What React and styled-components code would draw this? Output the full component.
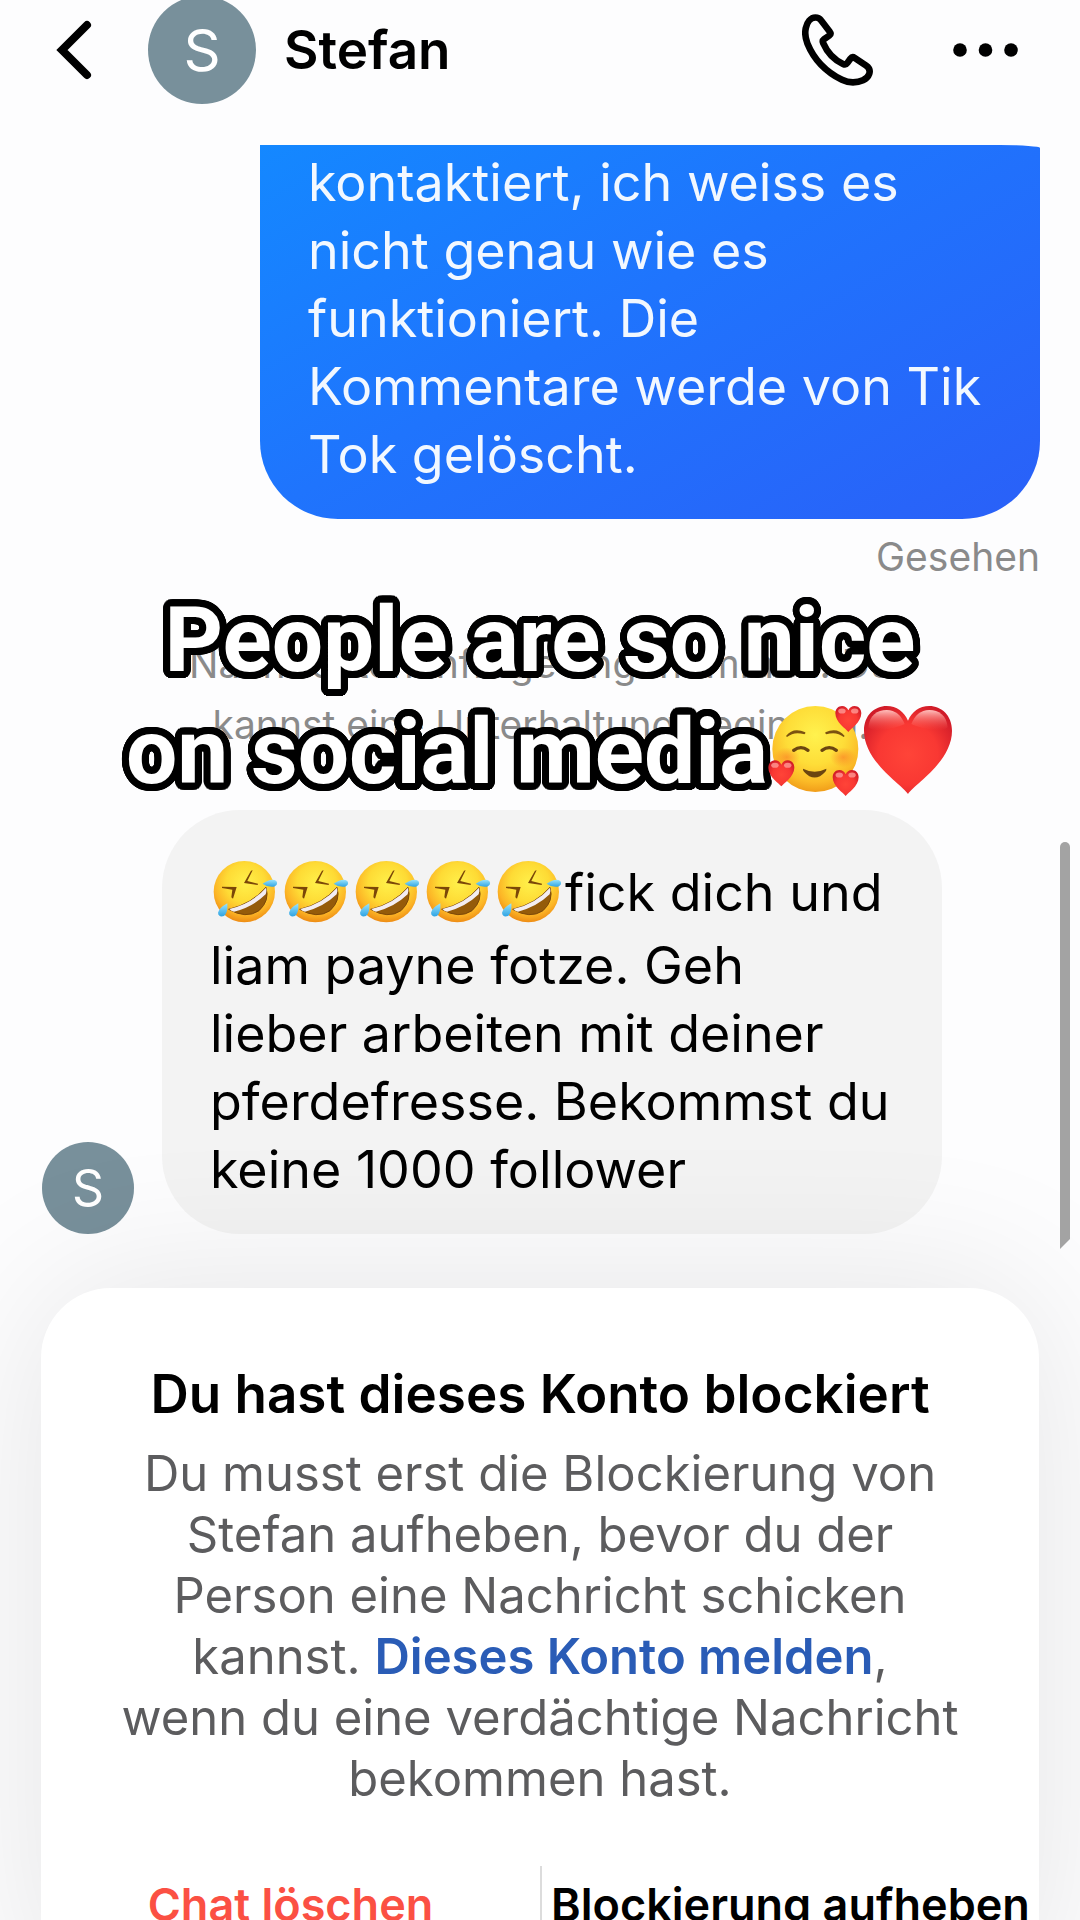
import React from "react";
import styled, { createGlobalStyle } from "styled-components";

const GlobalStyle = createGlobalStyle`
  *, *::before, *::after { box-sizing: border-box; }
  body {
    margin: 0;
    background: #fdfdfe;
    font-family: Inter, "Noto Sans", sans-serif;
    color: #000;
  }
  p, h1, h2 { margin: 0; }
`;

const Screen = styled.div`
  position: relative;
  height: 100vh;
  overflow: hidden;
  background: #fdfdfe;
`;

const Header = styled.header`
  display: flex;
  align-items: center;
  height: 100px;
  margin-bottom: 45px;
  padding: 0 62px 0 56px;
`;

const IconButton = styled.button`
  display: flex;
  padding: 0;
  border: 0;
  background: none;
  color: inherit;
  cursor: pointer;
`;

const Profile = styled.div`
  display: flex;
  flex: 1;
  align-items: center;
  gap: 28px;
  margin-left: 56px;
`;

const Actions = styled.div`
  display: flex;
  align-items: center;
  gap: 79px;
`;

const Avatar = styled.div`
  display: flex;
  flex: none;
  align-items: center;
  justify-content: center;
  width: ${(p) => p.$size}px;
  height: ${(p) => p.$size}px;
  border-radius: 50%;
  background: #78909b;
  color: #fff;
  font-size: ${(p) => (p.$size > 100 ? 58 : 50)}px;
`;

const Name = styled.h1`
  font-size: 53px;
  font-weight: 600;
  line-height: 64px;
`;

const Conversation = styled.main`
  display: flex;
  flex-direction: column;
  padding: 0 40px 0 42px;
`;

const Bubble = styled.p`
  width: 780px;
  max-width: 100%;
  font-size: 52px;
  line-height: 68px;
`;

const SentBubble = styled(Bubble)`
  align-self: flex-end;
  padding: 4px 48px 30px;
  border-radius: 0 40px 78px 78px / 0 3px 78px 78px;
  background: linear-gradient(150deg, #1488ff 0%, #1f74fd 45%, #2a60f8 100%);
  color: #f2f8ff;
`;

const ReceivedBubble = styled(Bubble)`
  padding: 49px 48px 30px;
  border-radius: 78px;
  background: #f3f3f3;
`;

const Seen = styled.span`
  align-self: flex-end;
  margin-top: 14px;
  color: #8a8a8a;
  font-size: 39px;
  line-height: 48px;
`;

const Notice = styled.p`
  align-self: center;
  max-width: 800px;
  margin-top: 52px;
  color: #8a8a8a;
  font-size: 39px;
  line-height: 61px;
  text-align: center;
`;

const ReceivedRow = styled.div`
  display: flex;
  align-items: flex-end;
  gap: 28px;
  margin-top: 55px;
`;

const BlockedCard = styled.section`
  position: relative;
  margin: 54px 41px 0;
  border-radius: 70px;
  background: #fff;
  box-shadow: 0 0 160px rgba(0, 0, 0, 0.1);
  text-align: center;
`;

const CardText = styled.div`
  padding: 74px 78px 57px;
`;

const CardTitle = styled.h2`
  margin-bottom: 17px;
  font-size: 53px;
  font-weight: 600;
  line-height: 64px;
`;

const CardBody = styled.p`
  color: #5c5c5e;
  font-size: 49px;
  line-height: 61px;
`;

const ReportLink = styled.a`
  color: #2a5cb6;
  font-weight: 600;
  text-decoration: none;
`;

const CardActions = styled.div`
  display: grid;
  grid-template-columns: 1fr 1fr;
  padding-bottom: 60px;
`;

const CardButton = styled.button`
  height: 78px;
  padding: 0;
  border: 0;
  background: none;
  color: ${(p) => (p.$danger ? "#fb5043" : "#000")};
  font: 600 45px/78px Inter, "Noto Sans", sans-serif;
  white-space: nowrap;
  cursor: pointer;

  & + & {
    border-left: 2px solid #dcdcdc;
  }
`;

const Caption = styled.p`
  position: absolute;
  top: 584px;
  left: 50%;
  width: 860px;
  max-width: 100%;
  transform: translateX(-50%);
  color: #fff;
  font-family: Roboto, "Liberation Sans", sans-serif;
  font-size: 91px;
  font-weight: 700;
  line-height: 112px;
  text-align: center;
  text-shadow: ${Array.from({ length: 40 }, (_, i) => {
    const angle = (i * Math.PI) / 20;
    return `${(7 * Math.cos(angle)).toFixed(2)}px ${(7 * Math.sin(angle)).toFixed(2)}px 0 #000`;
  }).join(", ")};
`;

const ScrollThumb = styled.div`
  position: absolute;
  top: 842px;
  right: 10px;
  width: 10px;
  height: 407px;
  border-radius: 5px 5px 0 0;
  background: #a3a3a3;
  clip-path: polygon(0 0, 100% 0, 100% calc(100% - 10px), 0 100%);
`;

const InlineEmoji = styled.svg`
  vertical-align: ${(p) => p.$drop}px;
`;

const HEART =
  "M450 312C430 282 318 215 318 122C318 76 350 48 386 48C416 48 439 66 450 92C461 66 484 48 514 48C550 48 582 76 582 122C582 215 470 282 450 312Z";

function Laughing() {
  return (
    <InlineEmoji $drop={-21} width="71" height="72" viewBox="60 30 213 216" role="img" aria-label="🤣">
      <defs>
        <radialGradient id="laughFace" cx="0.52" cy="0.36" r="0.64">
          <stop offset="0" stopColor="#fff04a" />
          <stop offset="0.5" stopColor="#fedb35" />
          <stop offset="0.8" stopColor="#fcb526" />
          <stop offset="1" stopColor="#ee8c14" />
        </radialGradient>
        <linearGradient id="tear" x1="0" y1="0" x2="0" y2="1">
          <stop offset="0" stopColor="#9be4fc" />
          <stop offset="1" stopColor="#2fa4e4" />
        </linearGradient>
      </defs>
      <circle cx="163" cy="125" r="92" fill="url(#laughFace)" />
      <path d="M96 110L140 111L129 146L124 142L127 119L96 114Z" fill="#7b4708" />
      <path d="M188 61L172 93L204 101L203 105L162 99L183 62Z" fill="#7b4708" />
      <path d="M116 178Q185 162 228 112Q240 152 207 182Q168 208 116 178Z" fill="#955b0a" stroke="#7b4708" strokeWidth="3" />
      <path d="M118 177Q186 161 228 113Q231 122 227 133Q188 171 132 185Q123 183 118 177Z" fill="#f3edf2" />
      <path d="M112 160Q114 190 102 198Q86 203 84 188Q87 174 112 160Z" fill="url(#tear)" />
      <path d="M218 101Q245 82 259 93Q266 104 252 110Q234 113 218 101Z" fill="url(#tear)" />
    </InlineEmoji>
  );
}

function HeartGradient({ id }) {
  return (
    <radialGradient id={id} cx="0.5" cy="0.55" r="0.62">
      <stop offset="0" stopColor="#ff4438" />
      <stop offset="0.55" stopColor="#f93833" />
      <stop offset="1" stopColor="#cf1a28" />
    </radialGradient>
  );
}

function SmallHeart({ x, y }) {
  return (
    <g transform={`translate(${x} ${y}) scale(0.295) translate(-450 -180)`}>
      <path d={HEART} fill="url(#smallHeart)" />
      <ellipse cx="385" cy="98" rx="38" ry="26" fill="#ff9a96" opacity="0.8" />
      <ellipse cx="515" cy="98" rx="38" ry="26" fill="#ff9a96" opacity="0.8" />
    </g>
  );
}

function SmilingWithHearts() {
  return (
    <InlineEmoji $drop={-14} width="94" height="94" viewBox="24 39 282 282" role="img" aria-label="🥰">
      <defs>
        <radialGradient id="loveFace" cx="0.5" cy="0.34" r="0.68">
          <stop offset="0" stopColor="#fff24e" />
          <stop offset="0.5" stopColor="#fedd38" />
          <stop offset="0.8" stopColor="#fbbb27" />
          <stop offset="1" stopColor="#ef9817" />
        </radialGradient>
        <radialGradient id="cheek">
          <stop offset="0" stopColor="#fb8a28" stopOpacity="0.75" />
          <stop offset="1" stopColor="#fb8a28" stopOpacity="0" />
        </radialGradient>
        <HeartGradient id="smallHeart" />
      </defs>
      <circle cx="166" cy="177" r="129" fill="url(#loveFace)" />
      <ellipse cx="80" cy="202" rx="40" ry="30" fill="url(#cheek)" />
      <ellipse cx="250" cy="202" rx="40" ry="30" fill="url(#cheek)" />
      <path d="M78 138Q100 110 136 127Q137 132 133 133Q103 123 81 141Z" fill="#7b5210" />
      <path d="M254 138Q232 110 196 127Q195 132 199 133Q229 123 251 141Z" fill="#7b5210" />
      <path d="M101 181Q123 165 144 181M186 181Q208 165 229 181" fill="none" stroke="#6b4510" strokeWidth="10" strokeLinecap="round" />
      <path d="M129 236Q164 254 199 236Q200 240 196 245Q164 280 132 245Q128 240 129 236Z" fill="#6b4510" />
      <SmallHeart x={265} y={87} />
      <SmallHeart x={64} y={250} />
      <SmallHeart x={257} y={279} />
    </InlineEmoji>
  );
}

function RedHeart() {
  return (
    <InlineEmoji $drop={-14} width="92" height="94" viewBox="312 39 276 282" role="img" aria-label="❤️">
      <defs>
        <HeartGradient id="bigHeart" />
        <linearGradient id="gloss" x1="0" y1="0" x2="0" y2="1">
          <stop offset="0" stopColor="#ffc0bd" />
          <stop offset="1" stopColor="#ff5a52" stopOpacity="0" />
        </linearGradient>
      </defs>
      <path d={HEART} fill="url(#bigHeart)" />
      <path d="M331 112C334 76 358 60 386 60C412 60 430 76 440 102C420 112 350 132 331 112Z" fill="url(#gloss)" />
      <path d="M569 112C566 76 542 60 514 60C488 60 470 76 460 102C480 112 550 132 569 112Z" fill="url(#gloss)" />
    </InlineEmoji>
  );
}

function BackIcon() {
  return (
    <svg width="36" height="60" viewBox="0 0 36 60" fill="none" stroke="currentColor" strokeWidth="8" aria-hidden="true">
      <path d="M31 5L6 30L31 55" strokeLinecap="round" strokeLinejoin="miter" />
    </svg>
  );
}

function PhoneIcon() {
  return (
    <svg width="71" height="72" viewBox="0 0 71 72" fill="none" stroke="currentColor" strokeWidth="6.6" strokeLinejoin="round" aria-hidden="true">
      <path d="M13.4 3.5C16 3.5 17.6 4.4 19 6.3L27.6 17.4C28.8 19 28.8 20.4 27.2 21.6L22 25.2C20.6 26.2 20.4 27.4 21.2 29.2C25 38 31.5 45.6 41 50C42.8 50.8 44.2 50.6 45.2 49.2L48.4 44.8C49.6 43.2 51 42.8 52.8 44L64 51.4C67.2 53.6 68.4 56.4 67.2 60C65.2 65.6 58 68.4 51 68.4C46.8 68.4 43.6 67.6 40 65.8C23.6 57.6 11.6 44.6 5.4 29.4C3.4 24.4 2.6 19.4 3.8 14C5 8.4 8.6 3.5 13.4 3.5Z" />
    </svg>
  );
}

function MoreIcon() {
  return (
    <svg width="66" height="20" viewBox="0 0 66 20" fill="currentColor" aria-hidden="true">
      <circle cx="8" cy="10" r="6.8" />
      <circle cx="33.5" cy="10" r="6.8" />
      <circle cx="59" cy="10" r="6.8" />
    </svg>
  );
}

export default function App() {
  return (
    <>
      <GlobalStyle />
      <Screen>
        <Header>
          <IconButton type="button" aria-label="Zurück">
            <BackIcon />
          </IconButton>
          <Profile>
            <Avatar $size={108}>S</Avatar>
            <Name>Stefan</Name>
          </Profile>
          <Actions>
            <IconButton type="button" aria-label="Anrufen">
              <PhoneIcon />
            </IconButton>
            <IconButton type="button" aria-label="Mehr">
              <MoreIcon />
            </IconButton>
          </Actions>
        </Header>

        <Conversation>
          <SentBubble>
            kontaktiert, ich weiss es nicht genau wie es funktioniert. Die Kommentare werde von Tik Tok gelöscht.
          </SentBubble>
          <Seen>Gesehen</Seen>
          <Notice>Nachrichtenanfrage angenommen. Du kannst eine Unterhaltung beginnen.</Notice>
          <ReceivedRow>
            <Avatar $size={92}>S</Avatar>
            <ReceivedBubble>
              <Laughing />
              <Laughing />
              <Laughing />
              <Laughing />
              <Laughing />
              fick dich und liam payne fotze. Geh lieber arbeiten mit deiner pferdefresse. Bekommst du keine 1000
              follower
            </ReceivedBubble>
          </ReceivedRow>
        </Conversation>

        <BlockedCard>
          <CardText>
            <CardTitle>Du hast dieses Konto blockiert</CardTitle>
            <CardBody>
              Du musst erst die Blockierung von Stefan aufheben, bevor du der Person eine Nachricht schicken kannst.{" "}
              <ReportLink href="#melden">Dieses Konto melden</ReportLink>,
              <br />
              wenn du eine verdächtige Nachricht bekommen hast.
            </CardBody>
          </CardText>
          <CardActions>
            <CardButton type="button" $danger>
              Chat löschen
            </CardButton>
            <CardButton type="button">Blockierung aufheben</CardButton>
          </CardActions>
        </BlockedCard>

        <ScrollThumb />
        <Caption>
          People are so nice on social media
          <SmilingWithHearts />
          <RedHeart />
        </Caption>
      </Screen>
    </>
  );
}
